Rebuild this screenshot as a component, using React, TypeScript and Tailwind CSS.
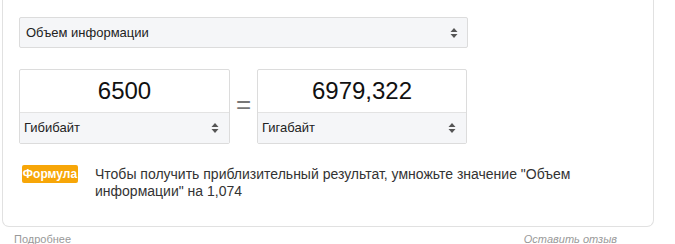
import React from "react";

const Arrows = () => (
  <svg width="8" height="12" viewBox="0 0 8 12" className="shrink-0">
    <path d="M4 1 L7.5 5 L0.5 5 Z" fill="#555" />
    <path d="M4 11 L7.5 7 L0.5 7 Z" fill="#555" />
  </svg>
);

function Box({ value, unit }: { value: string; unit: string }) {
  return (
    <div className="flex flex-col border border-[#dcdcdc] rounded-[2px] bg-white">
      <div className="h-[43px] flex items-center justify-center text-[24px] text-[#111] border-b border-[#e3e3e3]">
        {value}
      </div>
      <div className="h-[30px] bg-[#f5f6f8] flex items-center justify-between pl-[4px] pr-[10px] text-[13px] text-[#222]">
        <span>{unit}</span>
        <Arrows />
      </div>
    </div>
  );
}

export default function App() {
  return (
    <div className="w-[675px] h-[244px] bg-white overflow-hidden relative" style={{ fontFamily: '"Liberation Sans", Arial, sans-serif' }}>
      <div className="ml-[2px] w-[652px] h-[228px] mt-[-1px] border border-t-0 border-[#e1e1e1] rounded-b-[7px] pl-[16px] pt-[18px]">
        <div className="w-[449px] h-[31px] border border-[#dcdcdc] bg-[#f5f6f8] rounded-[2px] flex items-center justify-between pl-[6px] pr-[9px] text-[13px] text-[#222]">
          <span>Объем информации</span>
          <Arrows />
        </div>
        <div className="flex items-center mt-[21px]">
          <div className="w-[211px]">
            <Box value="6500" unit="Гибибайт" />
          </div>
          <div className="w-[27px] flex items-center justify-center text-[26px] text-[#777] leading-none pb-[6px]">=</div>
          <div className="w-[210px]">
            <Box value="6979,322" unit="Гигабайт" />
          </div>
        </div>
        <div className="flex items-start mt-[21px] pl-[3px]">
          <div className="w-[56px] h-[18px] bg-[#f7a608] rounded-[2px] text-white text-[12px] font-bold flex items-center justify-center shrink-0">
            Формула
          </div>
          <div className="ml-[17px] w-[490px] text-[14px] leading-[17px] text-[#333] mt-[1px]">
            Чтобы получить приблизительный результат, умножьте значение "Объем информации" на 1,074
          </div>
        </div>
      </div>
      <div className="flex justify-between pl-[14px] pr-[58px] mt-[4px] text-[11px] text-[#999]">
        <span>Подробнее</span>
        <span className="italic">Оставить отзыв</span>
      </div>
    </div>
  );
}
